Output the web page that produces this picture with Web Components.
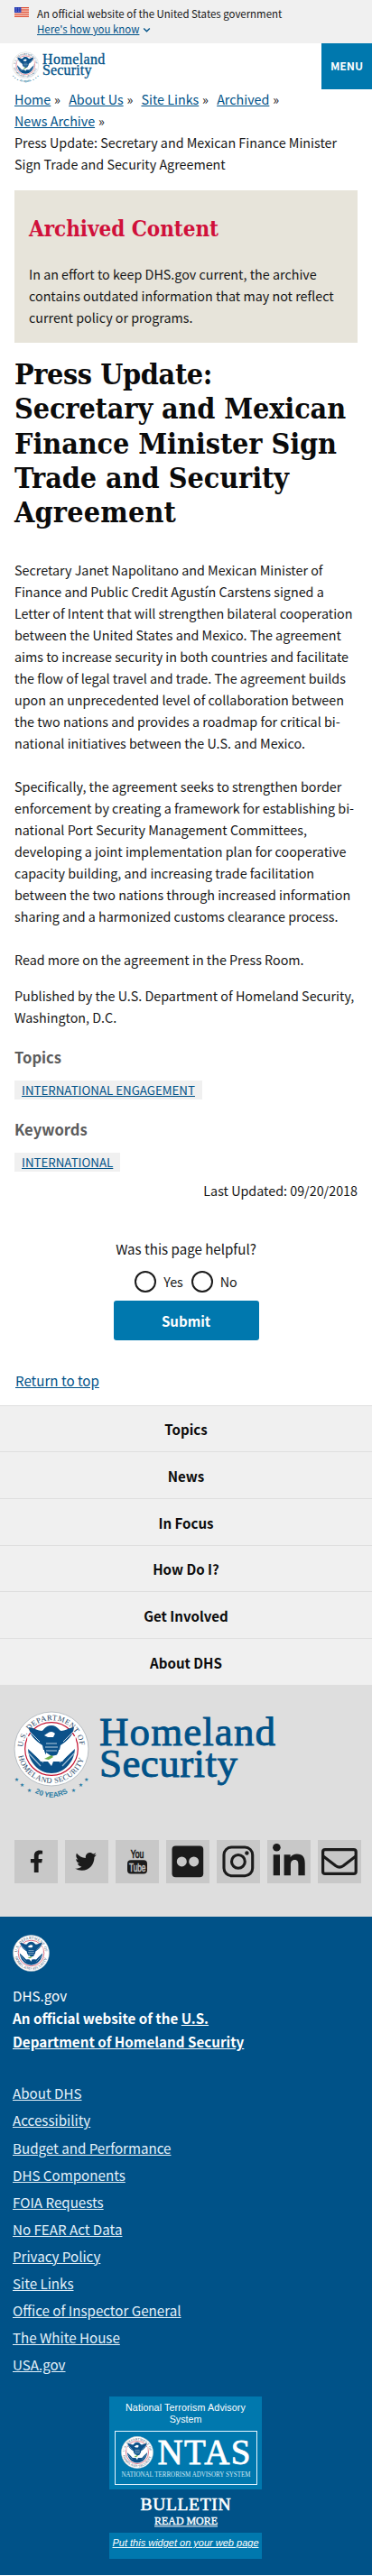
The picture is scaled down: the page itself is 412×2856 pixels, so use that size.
<!DOCTYPE html>
<html lang="en">
<head>
<meta charset="utf-8">
<title>Press Update | Homeland Security</title>
<style>
html,body{margin:0;padding:0;background:#fff}
body{font-family:"Noto Sans CJK SC","Noto Sans",sans-serif;font-size:14.32px;line-height:24px;color:#151515;width:412px;overflow-x:hidden}
</style>
</head>
<body>
<dhs-page></dhs-page>
<script>
const def=(name,html,after)=>customElements.define(name,class extends HTMLElement{
  connectedCallback(){
    if(this.shadowRoot)return;
    const r=this.attachShadow({mode:'open'});
    r.innerHTML=typeof html==='function'?html(this):html;
    if(after)after(this,r);
  }
});

/* One line of type, tracked so that it fills the measure given in w */
def('fit-line',`<style>:host{display:block;white-space:nowrap}span{display:inline-block;text-decoration:var(--line,none)}</style><span><slot></slot></span>`,(el,r)=>{
  const s=r.querySelector('span'),w=+el.getAttribute('w'),n=el.textContent.length;
  const now=s.getBoundingClientRect().width;
  s.style.letterSpacing=((w-now)/n)+'px';
});

const sealArt=`
<circle r="41" fill="#fff" stroke="#b9bfc4" stroke-width="1"/>
<circle r="29.3" fill="#fff" stroke="#c41230" stroke-width="1.2"/>
<path d="M-26 -4C-27 14-14 27 0 27S27 14 26 -4L12 14L-12 14Z" fill="#0b5189"/>
<path d="M-25 -1L-9 15M-25 5L-12 19M25 -1L9 15M25 5L12 19" stroke="#9fbdd4" stroke-width="1.2"/>
<path d="M-27 -15L-9 -3L-4 10L-11 14L-26 0ZM27 -15L9 -3L4 10L11 14L26 0Z" fill="#fff"/>
<path d="M-25 -24C-18 -23-15 -20-11 -20C-8 -20-8 -26 0 -26C7 -26 8 -20 11 -20C15 -20 18 -23 25 -24C24 -15 18 -9 10 -4L9 1H-9L-10 -4C-18 -9-24 -15-25 -24Z" fill="#0b5189"/>
<path d="M-25 -20L-13 -8M25 -20L13 -8" stroke="#fff" stroke-width=".8"/>
<path d="M-5 -17Q0 -21 4 -17L2 -13H-4L-8 -15Z" fill="#fff"/>
<path d="M-8 -9H8V2Q6 9 0 12Q-6 9-8 2Z" fill="#0b5189"/>
<path d="M-6 -6H6M-7 -2H7M-6 2H6" stroke="#b9d0e0" stroke-width="1.2"/>
<path d="M-6 4L0 8L9 6L6 10L12 13L2 14L0 19L-4 14L-11 13L-6 9Z" fill="#fff"/>
<path d="M-8 11L0 7L2 9L-3 12Z" fill="#6fb04a"/>`;
const sealText=`
<path id="t" d="M-31.4 5A31.8 31.8 0 1 1 31.4 5" fill="none"/>
<path id="b" d="M-37.2 5A37.5 37.5 0 0 0 37.2 5" fill="none"/>
<g fill="#1d3f63" font-family="Liberation Serif,serif" font-size="8.4">
<text><textPath href="#t" startOffset="7" textLength="94">U.S. DEPARTMENT OF</textPath></text>
<text><textPath href="#b" startOffset="3" textLength="99">HOMELAND SECURITY</textPath></text></g>`;

def('dhs-seal',`<style>:host{display:block}svg{display:block;width:100%;height:100%}</style><svg viewBox="-42 -42 84 84">${sealArt}${sealText}</svg>`);

/* Seal, anniversary stars and wordmark */
def('dhs-logo',`<style>:host{display:block}svg{display:block;width:100%;height:100%}</style>
<svg viewBox="0 0 300 105"><g transform="translate(43 43)">${sealArt}${sealText}
<path id="y" d="M-34 36Q0 71.5 34 36" fill="none"/>
<g fill="#2a7ba3" text-anchor="middle" font-family="DejaVu Sans,sans-serif" font-size="6"><text x="-38.5" y="36">★</text><text x="-32.5" y="42.2">★</text><text x="-24.5" y="47.5">★</text><text x="24.5" y="47.5">★</text><text x="32.5" y="42.2">★</text><text x="38.7" y="36">★</text></g>
<text fill="#2a7ba3" font-family="Liberation Sans,sans-serif" font-size="8" font-weight="bold" text-anchor="middle"><textPath href="#y" startOffset="50%">20 YEARS</textPath></text></g>
<g fill="#005288" stroke="#005288" stroke-width=".9" font-family="Liberation Serif,serif" font-size="45">
<text x="96" y="39" textLength="195">Homeland</text><text x="96" y="74" textLength="153">Security</text></g></svg>`);

def('us-flag',()=>{let s='';for(let i=0;i<7;i++)s+=`<rect y="${i*1.69}" width="16" height=".95" fill="#db3e1f"/>`;
let d='';for(let y=0;y<3;y++)for(let x=0;x<4;x++)d+=`<circle cx="${1.2+x*1.6}" cy="${1.1+y*1.8}" r=".35" fill="#fff"/>`;
return `<style>:host{display:block}svg{display:block}</style><svg width="16" height="11"><rect width="16" height="11" fill="#fff"/>${s}<rect width="7.4" height="6" fill="#1e33b1"/>${d}</svg>`});

def('gov-banner',`<style>:host{display:flex;box-sizing:border-box;height:48px;background:#f0f0f0;padding:7px 16px 0;gap:8.7px;font-size:11.45px;line-height:17px}
us-flag{margin:1px 0 0 .3px}a{color:#005288;text-decoration:underline}svg{margin-left:4px;vertical-align:-1px}div{white-space:nowrap}</style>
<us-flag></us-flag><div>An official website of the United States government<br><a>Here's how you know</a><svg width="9" height="9" viewBox="0 0 9 9"><path d="M1.2 2.6L4.5 5.8L7.8 2.6" fill="none" stroke="#005288" stroke-width="1.4"/></svg></div>`);

def('site-header',`<style>:host{display:flex;justify-content:space-between;height:50px}
dhs-logo{width:106.5px;height:37.3px;margin:8.8px 0 0 13.2px}
button{all:unset;width:56px;height:50.7px;background:#0078ae;color:#fff;font-weight:bold;font-size:12.2px;line-height:50px;text-align:center}</style>
<dhs-logo></dhs-logo><button>MENU</button>`);

def('crumb-trail',`<style>:host{display:block;padding:0 16px;white-space:nowrap}a{color:#005288;text-decoration:underline}i{font-style:normal;margin:0 9.2px 0 3.8px}</style>
<a>Home</a><i>»</i><a>About Us</a><i>»</i><a>Site Links</a><i>»</i><a>Archived</a><i>»</i><br><a>News Archive</a><i>»</i><br>Press Update: Secretary and Mexican Finance Minister<br>Sign Trade and Security Agreement`);

def('archive-notice',`<style>:host{display:block;box-sizing:border-box;margin:16.5px 16px 0;padding:27.5px 16px 0;height:169.5px;background:#e7e4da}
h2{margin:0 0 21.8px;font:bold 24px/32px "DejaVu Serif Condensed","DejaVu Serif",serif;color:#d0103a}p{margin:0;white-space:nowrap}</style>
<h2><fit-line w="210">Archived Content</fit-line></h2><p>In an effort to keep DHS.gov current, the archive<br>contains outdated information that may not reflect<br>current policy or programs.</p>`);

def('press-article',`<style>:host{display:block;padding:0 16px}h1{margin:15.8px 0 32.3px;font:bold 32px/38.4px "DejaVu Serif Condensed","DejaVu Serif",serif;color:#0b0b0b}
p{margin:0 0 24px;white-space:nowrap}p.pub{margin:-7.7px 0 0}</style>
<h1><fit-line w="219">Press Update:</fit-line><fit-line w="367">Secretary and Mexican</fit-line><fit-line w="357">Finance Minister Sign</fit-line><fit-line w="304">Trade and Security</fit-line><fit-line w="179">Agreement</fit-line></h1>
<p>Secretary Janet Napolitano and Mexican Minister of<br>Finance and Public Credit Agustín Carstens signed a<br>Letter of Intent that will strengthen bilateral cooperation<br>between the United States and Mexico. The agreement<br>aims to increase security in both countries and facilitate<br>the flow of legal travel and trade. The agreement builds<br>upon an unprecedented level of collaboration between<br>the two nations and provides a roadmap for critical bi-<br>national initiatives between the U.S. and Mexico.</p>
<p>Specifically, the agreement seeks to strengthen border<br>enforcement by creating a framework for establishing bi-<br>national Port Security Management Committees,<br>developing a joint implementation plan for cooperative<br>capacity building, and increasing trade facilitation<br>between the two nations through increased information<br>sharing and a harmonized customs clearance process.</p>
<p>Read more on the agreement in the Press Room.</p>
<p class="pub">Published by the U.S. Department of Homeland Security,<br>Washington, D.C.</p>`);

def('tag-group',el=>`<style>:host{display:block;padding:0 16px}h3{margin:0 0 14.2px;font-size:16.6px;line-height:24px;color:#5c5c5c}
a{display:block;width:max-content;padding:.5px 8px 0;background:#f0f0f0;color:#005288;font-size:13.3px;line-height:20.3px;text-decoration:underline;text-transform:uppercase}</style>
<h3>${el.getAttribute('heading')}</h3><a><slot></slot></a>`);

def('page-feedback',`<style>:host{display:flex;flex-direction:column;align-items:center;padding-top:40.4px}
.q{font-size:15.1px}
.r{display:flex;align-items:center;height:24px;margin-top:12.7px}
i{width:20px;height:20px;border:2px solid #1b1b1b;border-radius:50%;margin-right:8px}
span{margin-right:9px}span:last-child{margin-right:0}
button{all:unset;margin-top:8.8px;width:161px;height:44.4px;border-radius:3px;background:#0078ae;color:#fff;font-weight:bold;font-size:15.1px;line-height:44px;text-align:center}</style>
<div class="q">Was this page helpful?</div><div class="r"><i></i><span>Yes</span><i></i><span>No</span></div><button>Submit</button>`);

def('footer-nav',el=>`<style>:host{display:block;background:#f0f0f0;height:310px}a{display:block;box-sizing:border-box;height:51.7px;border-top:1px solid #dfdfdf;text-align:center;font-weight:bold;font-size:15.1px;line-height:28px;padding-top:11.5px;color:#0b0b0b}</style>
${el.getAttribute('items').split('|').map(t=>`<a>${t}</a>`).join('')}`);

const glyphs={
facebook:`<path transform="translate(16.8 11.5) scale(.048)" d="M279.14 288l14.22-92.66h-88.91v-60.13c0-25.35 12.42-50.06 52.24-50.06h40.42V6.26S260.43 0 225.36 0c-73.22 0-121.08 44.38-121.08 124.72v70.62H22.89V288h81.39v224h100.17V288z"/>`,
twitter:`<path transform="translate(11.3 11.6) scale(.046 .048)" d="M459.37 151.716c.325 4.548.325 9.097.325 13.645 0 138.72-105.583 298.558-298.558 298.558-59.452 0-114.68-17.219-161.137-47.106 8.447.974 16.568 1.299 25.34 1.299 49.055 0 94.213-16.568 130.274-44.832-46.132-.975-84.792-31.188-98.112-72.772 6.498.974 12.995 1.624 19.818 1.624 9.421 0 18.843-1.3 27.614-3.573-48.081-9.747-84.143-51.98-84.143-102.985v-1.299c13.969 7.797 30.214 12.67 47.431 13.319-28.264-18.843-46.781-51.005-46.781-87.391 0-19.492 5.197-37.36 14.294-52.954 51.655 63.675 129.3 105.258 216.365 109.807-1.624-7.797-2.599-15.918-2.599-24.04 0-57.828 46.782-104.934 104.934-104.934 30.213 0 57.502 12.67 76.67 33.137 23.715-4.548 46.456-13.32 66.599-25.34-7.798 24.366-24.366 44.833-46.132 57.827 21.117-2.273 41.584-8.122 60.426-16.243-14.292 20.791-32.161 39.308-52.628 54.253z"/>`,
youtube:`<rect x="13" y="22.3" width="22" height="15.2" rx="4"/><g font-family="Liberation Sans,sans-serif" font-size="13"><text x="16.7" y="20.2" textLength="14.5" lengthAdjust="spacingAndGlyphs" stroke="#1b1b1b" stroke-width=".7">You</text><text x="15" y="34.8" textLength="18.4" lengthAdjust="spacingAndGlyphs" fill="#c8c8c8" stroke="#c8c8c8" stroke-width=".5">Tube</text></g>`,
flickr:`<rect x="6.5" y="6.5" width="34.7" height="34.7" rx="4"/><circle cx="17.3" cy="23.9" r="5.5" fill="#c8c8c8"/><circle cx="30.7" cy="23.9" r="5.5" fill="#c8c8c8"/>`,
instagram:`<g fill="none" stroke="#1b1b1b" stroke-width="3.1"><rect x="8" y="8" width="31.7" height="31.7" rx="8.5"/><circle cx="23.9" cy="23.9" r="7.4"/></g><circle cx="33.4" cy="14.5" r="2.2"/>`,
linkedin:`<circle cx="10.4" cy="8.2" r="4.3"/><path d="M6.7 16.2H14V39.2H6.7ZM18.6 16.2H25.6V19.3C27.2 16.8 29.6 15.6 32.8 15.6C39.4 15.6 41.7 19.4 41.7 26V39.2H34.4V27.6C34.4 24.4 33.8 22 30.5 22C27 22 25.9 24.4 25.9 27.8V39.2H18.6Z"/>`,
mail:`<g fill="none" stroke="#1b1b1b" stroke-width="3.2" stroke-linejoin="round"><rect x="5.6" y="10.6" width="36.6" height="26.8" rx="2.5"/><path d="M6 18L20 28.8Q24 31.6 28 28.8L42 18"/></g>`};
def('social-icon',el=>`<style>:host{display:block;flex:none;width:48px;height:48px;background:#c8c8c8}svg{display:block}</style><svg width="48" height="48" fill="#1b1b1b">${glyphs[el.getAttribute('name')]}</svg>`);

def('footer-brand',`<style>:host{display:block;box-sizing:border-box;background:#dedede;height:257px;padding:28px 0 0 13.5px}dhs-logo{width:300px;height:105px}
div{display:flex;gap:8px;margin:39px 0 0 2.5px}</style><dhs-logo></dhs-logo><div>${Object.keys(glyphs).map(n=>`<social-icon name="${n}"></social-icon>`).join('')}</div>`);

def('ntas-widget',`<style>:host{display:block;width:169px;margin:0 auto;color:#fff;text-align:center;font-family:"Liberation Sans",sans-serif;white-space:nowrap}
.t{box-sizing:border-box;height:103px;background:#0078ae;padding-top:5.5px;font-size:10.7px;line-height:13px}
.f{box-sizing:border-box;display:flex;width:158px;height:60px;margin:6.5px auto 0;border:1.5px solid #e8f6ff}
.m{height:48px;display:block}.p{height:29px;background:#0078ae;font-size:11px;line-height:23px;font-style:italic;--line:underline}svg{display:block}</style>
<div class="t"><fit-line w="133">National Terrorism Advisory</fit-line>System<div class="f"><svg width="155" height="57" viewBox="0 0 155 57"><g transform="translate(24 23) scale(.43)">${sealArt}${sealText}</g><g font-family="Liberation Serif,serif" fill="#fff"><text x="46.5" y="36" font-size="39" textLength="103" stroke="#fff" stroke-width=".8">NTAS</text><text x="6.5" y="50" font-size="7.3" textLength="143" lengthAdjust="spacingAndGlyphs" fill="#cfe8f4">NATIONAL TERRORISM ADVISORY SYSTEM</text></g></svg></div></div>
<svg class="m" width="169" height="48" fill="#fff" font-family="Liberation Serif,serif"><text x="34.5" y="23" font-size="19.5" textLength="100" stroke="#fff" stroke-width=".6">BULLETIN</text><text x="50" y="39" font-size="12.6" textLength="70" lengthAdjust="spacingAndGlyphs" stroke="#fff" stroke-width=".4">READ MORE</text><rect x="50" y="40.4" width="70" height="1"/></svg>
<div class="p"><fit-line w="162">Put this widget on your web page</fit-line></div>`);

def('site-identifier',el=>`<style>:host{display:block;box-sizing:border-box;height:730px;background:#005288;color:#fff;padding:20px 14px 0}
dhs-seal{width:41px;height:41px;margin-left:-.5px}p{margin:14px 0 0;line-height:25.6px;font-size:15.2px;white-space:nowrap}u{text-decoration:underline}
ul{list-style:none;margin:28.9px 0 0;padding:0;font-size:15.15px}li{height:30.1px;line-height:30.1px;text-decoration:underline;color:#e4f1fa}ntas-widget{margin-top:21px;position:relative;left:-.5px}</style>
<dhs-seal></dhs-seal><p>DHS.gov<br><b>An official website of the <u>U.S.</u><br><u>Department of Homeland Security</u></b></p>
<ul>${el.getAttribute('links').split('|').map(t=>`<li>${t}</li>`).join('')}</ul><ntas-widget></ntas-widget>`);

def('dhs-page',`<style>:host{display:block}.g{margin-top:19.4px}.k{margin-top:21.2px}.u{margin:9.1px 16px 0;text-align:right}.top{display:block;margin:31.8px 0 15.5px 17px;color:#005288;text-decoration:underline;font-size:15.1px}</style>
<gov-banner></gov-banner><site-header></site-header><crumb-trail></crumb-trail><archive-notice></archive-notice><press-article></press-article>
<tag-group class="g" heading="Topics">International Engagement</tag-group><tag-group class="k" heading="Keywords">International</tag-group>
<div class="u">Last Updated: 09/20/2018</div><page-feedback></page-feedback><a class="top">Return to top</a>
<footer-nav items="Topics|News|In Focus|How Do I?|Get Involved|About DHS"></footer-nav><footer-brand></footer-brand>
<site-identifier links="About DHS|Accessibility|Budget and Performance|DHS Components|FOIA Requests|No FEAR Act Data|Privacy Policy|Site Links|Office of Inspector General|The White House|USA.gov"></site-identifier>`);
</script>
</body>
</html>
